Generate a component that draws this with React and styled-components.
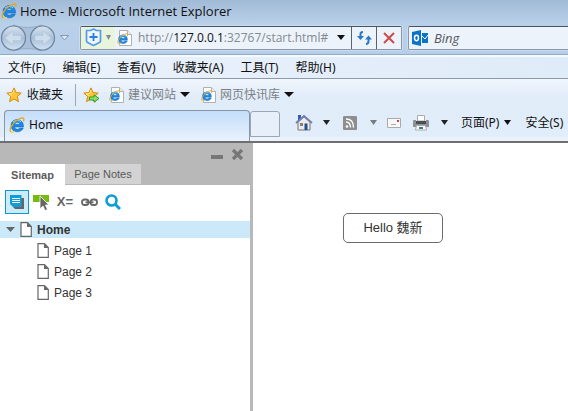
import React from "react";
import styled, { createGlobalStyle } from "styled-components";

const ui = '"Noto Sans", "Noto Sans CJK SC", sans-serif';
const arial = '"Liberation Sans", "Noto Sans CJK SC", sans-serif';

const GlobalStyle = createGlobalStyle`
  * { box-sizing: border-box; }
  body { margin: 0; background: #fff; color: #111; font: 12px/16px ${ui}; }
  button, input { font: inherit; color: inherit; }
  svg { display: block; flex: none; }
`;

const Window = styled.div`
  display: flex;
  flex-direction: column;
  min-height: 100vh;
`;

const Chrome = styled.header`
  background: linear-gradient(#a1bad6 0, #b9d0e9 24px, #b6cee9 55px);
`;

const TitleBar = styled.div`
  display: flex;
  align-items: center;
  gap: 3px;
  height: 21px;
  padding-left: 1px;
  white-space: nowrap;
`;

const Title = styled.h1`
  margin: 0;
  font: 13px/16px "Open Sans", sans-serif;
`;

const NavBar = styled.div`
  display: flex;
  align-items: center;
  height: 34px;
  border-bottom: 1px solid #94abc6;
`;

const PlainButton = styled.button`
  display: flex;
  align-items: center;
  flex: none;
  gap: ${(p) => p.$gap || 0}px;
  padding: 0;
  border: 0;
  background: none;
  color: #111;
  white-space: nowrap;
`;

const Travel = styled.div`
  display: flex;
  align-items: center;
  flex: none;
  width: 80px;
`;

const Field = styled.div`
  display: flex;
  align-items: center;
  flex: 0 0 322px;
  height: 24px;
  border: 1px solid #8996a5;
  border-top-color: #48535f;
  border-radius: 2px;
  background: #edf3fb;
  box-shadow: 0 0 0 1px #c9dcf0;
`;

const SearchField = styled(Field)`
  flex: 1 1 0;
  min-width: 0;
  margin-left: 6px;
  border-right: 0;
  border-radius: 2px 0 0 2px;
  box-shadow: -1px 0 0 #c9dcf0, 0 1px 0 #c9dcf0;
`;

const Shield = styled(PlainButton)`
  width: 34px;
  height: 22px;
  padding-left: 4px;
  background: #e9f4dd;
`;

const Address = styled.div`
  display: flex;
  align-items: center;
  flex: 1;
  gap: 6px;
  height: 22px;
  padding-left: 2px;
  color: #858a90;
  font: 12px/20px "Open Sans", sans-serif;
  white-space: nowrap;
`;

const Host = styled.span`
  color: #111;
`;

const FieldButton = styled(PlainButton)`
  justify-content: center;
  width: ${(p) => p.$w}px;
  height: 22px;
  border-left: ${(p) => (p.$line ? "1px solid #59636e" : "0")};
`;

const Search = styled.input`
  flex: 1;
  min-width: 0;
  height: 20px;
  padding: 0 0 0 5px;
  border: 0;
  outline: 0;
  background: none;
  font: italic 13px/16px "Open Sans", sans-serif;
  &::placeholder { color: #55585c; opacity: 1; }
`;

const MenuBar = styled.nav`
  display: flex;
  align-items: center;
  gap: 17px;
  height: 24px;
  padding: 0 8px;
  border-top: 2px solid #f2fbff;
  border-bottom: 1px solid #8c9aaa;
  background: linear-gradient(90deg, #ebf2fc, #dfebf8);
`;

const Lower = styled.div`
  background: linear-gradient(#f0f6fd 0, #e1ecf9 18px, #e1edfa 100%);
  border-bottom: 2px solid #6d6f72;
`;

const Favorites = styled.div`
  display: flex;
  align-items: center;
  height: 31px;
  padding: 0 6px;
`;

const Divider = styled.span`
  width: 1px;
  height: 22px;
  margin: 0 7px 0 12px;
  background: #9ba6b3;
`;

const FavGroup = styled.div`
  display: flex;
  align-items: center;
  gap: 9px;
`;

const FavLink = styled(PlainButton)`
  gap: 4px;
  padding-right: 2px;
  color: #7b7f84;
`;

const TabRow = styled.div`
  display: flex;
  align-items: flex-start;
  height: 31px;
  padding-left: 4px;
  border-bottom: 4px solid #edf3fa;
`;

const BrowserTab = styled(PlainButton)`
  width: 246px;
  height: 31px;
  padding: 0 4px 2px;
  border: 1px solid #8795a6;
  border-bottom: 0;
  border-radius: 4px 4px 0 0;
  background: linear-gradient(#c3ddfa, #eaf3fd);
  font: 12px/16px ${ui};
`;

const NewTab = styled(PlainButton)`
  width: 30px;
  height: 26px;
  margin-top: 1px;
  border: 1px solid #99a6b5;
  border-radius: 3px 3px 0 0;
  background: #e6effa;
`;

const Commands = styled.div`
  display: flex;
  align-items: center;
  height: 25px;
  padding-left: 15px;
`;

const CommandSet = styled.div`
  display: flex;
  align-items: center;
  gap: ${(p) => p.$gap}px;
  margin-right: ${(p) => p.$after}px;
`;

const Content = styled.div`
  display: flex;
  flex: 1;
`;

const Sidebar = styled.aside`
  flex: 0 0 253px;
  border-right: 3px solid #b8b8b8;
  font-family: ${arial};
  color: #333;
`;

const PanelHead = styled.div`
  display: flex;
  justify-content: flex-end;
  align-items: center;
  gap: 8px;
  height: 21px;
  padding: 2px 6px 0 0;
  background: #b8b8b8;
`;

const PanelTabs = styled.div`
  display: flex;
  height: 21px;
  background: #b8b8b8;
`;

const PanelTab = styled.button`
  height: ${(p) => (p.$active ? 21 : 20)}px;
  width: ${(p) => (p.$active ? 65 : 76)}px;
  padding: 0;
  border: 0;
  background: ${(p) => (p.$active ? "#fff" : "#d3d3d3")};
  color: #5a5a5a;
  font: ${(p) => (p.$active ? "bold" : "normal")} 11px/20px ${arial};
`;

const Tools = styled.div`
  display: flex;
  align-items: center;
  height: 36px;
  padding: 0 5px 2px;
`;

const ToolButton = styled(PlainButton)`
  justify-content: center;
  width: 24px;
  height: 24px;
  border: ${(p) => (p.$active ? "1px solid #0c98d6" : "0")};
  background: ${(p) => (p.$active ? "#cdeaf8" : "none")};
  color: #666;
  font: bold 13px/20px ${arial};
`;

const Tree = styled.ul`
  display: grid;
  gap: 4px;
  margin: 0;
  padding: 0;
  list-style: none;
`;

const TreeRow = styled.li`
  display: flex;
  align-items: center;
  gap: 5px;
  height: 17px;
  padding-left: ${(p) => (p.$root ? 6 : 37)}px;
  background: ${(p) => (p.$root ? "#cbe9f8" : "none")};
  font-weight: ${(p) => (p.$root ? "bold" : "normal")};
`;

const PageLink = styled.a`
  color: #333;
  text-decoration: none;
  font-size: 12px;
`;

const Page = styled.main`
  flex: 1;
  padding: 70px 0 0 90px;
`;

const HelloButton = styled.button`
  width: 100px;
  height: 30px;
  padding: 0;
  border: 1px solid #6c6c6c;
  border-radius: 5px;
  background: #fff;
  color: #333;
  font: 13px/26px ${arial};
`;

const Caret = ({ c = "#111", w = 8 }) => (
  <svg width={w} height="5" viewBox="0 0 10 5" preserveAspectRatio="none" aria-hidden="true">
    <path d="M0 0h10L5 5z" fill={c} />
  </svg>
);

const IeShapes = () => (
  <>
    <path d="M14.500 10H5.800c.4 2.700 3.800 2.900 4.900 1h3.600c-2.200 5.800-12.300 5-12.300-2.500C2 .500 15.200.300 14.500 10zM5.800 7.300h5.100c-.3-2.800-4.700-2.800-5.100 0z" fill="#1c8ae4" stroke="#0d5db4" strokeWidth=".5" />
    <path d="M4 5.200C5.800 3.200 9.800 2.900 12 4.700" stroke="#7fd6fb" strokeWidth="1.200" fill="none" />
    <path d="M2.200 15C-1 13 3.500 6 8.600 2.800c4.200-2.700 7.400-2.600 5.900 1.400" stroke="#eaa51b" strokeWidth="1.300" fill="none" />
    <path d="M2.200 15c1 .5 2.500 0 3.800-.8" stroke="#f5cb45" strokeWidth="1.200" fill="none" />
  </>
);

const IeIcon = () => (
  <svg width="16" height="16" viewBox="0 0 16 16" aria-hidden="true"><IeShapes /></svg>
);

const IePage = () => (
  <svg width="15" height="16" viewBox="0 0 15 16" aria-hidden="true">
    <path d="M2.500.5h8l4 4v11h-12z" fill="#fff" stroke="#b0b0b0" />
    <path d="M10.500.5v4h4" fill="#eee" stroke="#b0b0b0" />
    <g transform="translate(0 3) scale(.72)"><IeShapes /></g>
  </svg>
);

const Star = ({ add }) => (
  <svg width={add ? 17 : 16} height="16" viewBox={add ? "0 0 17 16" : "0 0 16 16"} aria-hidden="true">
    <path d="M8 .9l2.100 4.700 5.100.5-3.900 3.400 1.200 5.200L8 12l-4.500 2.700 1.200-5.200L.8 6.100l5.100-.5z" fill="#ffc532" stroke="#d78a16" strokeLinejoin="round" />
    <path d="M8 3L6.600 6.500 3 6.900l2.800 1.700" stroke="#ffe990" fill="none" />
    {add && <path d="M6.500 10h4.500V7.800l5 3.700-5 3.700V13H6.500z" fill="#8be068" stroke="#2f9a2b" />}
  </svg>
);

const TravelArrows = () => (
  <svg width="56" height="28" viewBox="0 0 56 28" aria-hidden="true">
    <defs>
      <linearGradient id="orb" x2="0" y2="1">
        <stop offset="0" stopColor="#d6e3f1" /><stop offset=".5" stopColor="#a9c0d9" /><stop offset="1" stopColor="#d1e2f3" />
      </linearGradient>
    </defs>
    <path d="M13 1q14 5 29 0v26q-15-5-29 0z" fill="#a9c0da" stroke="#96adc7" />
    <circle cx="13.500" cy="14" r="12" fill="url(#orb)" stroke="#6e8299" strokeWidth="1.200" />
    <circle cx="42.500" cy="14" r="12" fill="url(#orb)" stroke="#6e8299" strokeWidth="1.200" />
    <path d="M5 14l8-7v4.500h8v5h-8V21zM51 14l-8-7v4.500h-8v5h8V21z" fill="#cfdeed" stroke="#b2c5da" strokeWidth=".6" />
  </svg>
);

const PageIcon = () => (
  <svg width="12" height="15" viewBox="0 0 12 15" aria-hidden="true">
    <path d="M1 .700h6.500L11.300 4.500v9.800H1z" fill="#fff" stroke="#666" strokeWidth="1.200" />
    <path d="M7 .500v4.500h4.500z" fill="#666" />
  </svg>
);

const pages = ["Page 1", "Page 2", "Page 3"];
const menus = ["文件(F)", "编辑(E)", "查看(V)", "收藏夹(A)", "工具(T)", "帮助(H)"];
const favorites = ["建议网站", "网页快讯库"];

export default function App() {
  return (
    <Window>
      <GlobalStyle />
      <Chrome>
        <TitleBar><IeIcon /><Title>Home - Microsoft Internet Explorer</Title></TitleBar>
        <NavBar>
          <Travel>
            <PlainButton aria-label="Back and forward"><TravelArrows /></PlainButton>
            <PlainButton aria-label="Recent pages">
              <svg width="16" height="8" viewBox="0 0 16 8"><path d="M4.500 1.500h8L8.500 6z" fill="#dce8f4" stroke="#8398b1" /></svg>
            </PlainButton>
          </Travel>
          <Field>
            <Shield $gap={4} aria-label="Site protection">
              <svg width="17" height="19" viewBox="0 0 17 19">
                <path d="M1.500 2.500h4l3-1.500 3 1.500h4v10.500q0 1-1.500 1.700L8.500 17.500 3 14.700Q1.500 14 1.500 13z" fill="#edf6fb" stroke="#559be9" strokeWidth="1.700" strokeLinejoin="round" />
                <path d="M8.500 5v8M4.500 9h8" stroke="#277fe0" strokeWidth="1.800" />
              </svg>
              <Caret c="#7c8d96" w={5} />
            </Shield>
            <Address><IePage /><span>http://<Host>127.0.0.1</Host>:32767/start.html#</span></Address>
            <FieldButton $w={20} aria-label="Show addresses"><Caret /></FieldButton>
            <FieldButton $w={25} $line aria-label="Refresh">
              <svg width="15" height="14" viewBox="0 0 15 14">
                <path d="M6 1Q3.500 1 3.500 3v3M9 13q2.500 0 2.500-3V8" fill="none" stroke="#2877c8" strokeWidth="2" />
                <path d="M0 5h7L3.500 9zM8 8.500h7L11.500 4.500z" fill="#2877c8" />
              </svg>
            </FieldButton>
            <FieldButton $w={25} $line aria-label="Stop">
              <svg width="12" height="12" viewBox="0 0 12 12"><path d="M1 1l10 10M11 1L1 11" stroke="#c94b4b" strokeWidth="2" /></svg>
            </FieldButton>
          </Field>
          <SearchField>
            <svg width="20" height="18" viewBox="0 0 20 18" aria-hidden="true">
              <path d="M3 3l9-2v16l-9-2z" fill="#0873c9" /><path d="M13 4h6v10h-6z" fill="#0873c9" />
              <path d="M13 7l3 3 3-4" stroke="#fff" fill="none" />
              <ellipse cx="7.500" cy="9" rx="2" ry="2.700" stroke="#fff" strokeWidth="1.500" fill="none" />
            </svg>
            <Search aria-label="Search" placeholder="Bing" />
          </SearchField>
        </NavBar>
      </Chrome>

      <MenuBar>{menus.map((m) => <PlainButton key={m}>{m}</PlainButton>)}</MenuBar>

      <Lower>
        <Favorites>
          <PlainButton $gap={5}><Star />收藏夹</PlainButton>
          <Divider />
          <FavGroup>
            <PlainButton aria-label="Add to favorites bar"><Star add /></PlainButton>
            {favorites.map((f) => <FavLink key={f}><IePage />{f}<Caret w={10} /></FavLink>)}
          </FavGroup>
        </Favorites>
        <TabRow>
          <BrowserTab $gap={4}><IeIcon />Home</BrowserTab>
          <NewTab aria-label="New tab" />
          <Commands>
            <CommandSet $gap={10} $after={13}>
              <PlainButton aria-label="Home page">
                <svg width="18" height="17" viewBox="0 0 18 17">
                  <path d="M3 1h3v5H3z" fill="#3158bd" />
                  <path d="M3 8l6-5 6 5v8H3z" fill="#ecebea" stroke="#777" />
                  <path d="M1 9l8-7 8 7" fill="none" stroke="#7180ad" strokeWidth="1.800" />
                  <path d="M9.500 9.500h3V16h-3z" fill="#204e91" /><path d="M5 9h3v3H5z" fill="#7c8188" />
                </svg>
              </PlainButton>
              <PlainButton aria-label="Home page options"><Caret c="#222" w={7} /></PlainButton>
            </CommandSet>
            <CommandSet $gap={13} $after={10}>
              <PlainButton aria-label="Feeds">
                <svg width="14" height="14" viewBox="0 0 14 14">
                  <rect width="14" height="14" rx="1" fill="#8e8e8e" />
                  <circle cx="4" cy="10.500" r="1.300" fill="#fff" />
                  <path d="M3 6q4.500 0 4.500 5.500M3 3q7.500 0 7.500 8.500" fill="none" stroke="#fff" strokeWidth="1.400" />
                </svg>
              </PlainButton>
              <PlainButton aria-label="Feed options"><Caret c="#777d84" w={7} /></PlainButton>
            </CommandSet>
            <CommandSet $gap={12} $after={13}>
              <PlainButton aria-label="Read mail">
                <svg width="14" height="10" viewBox="0 0 14 10"><path d="M.5.500h13v9H.5z" fill="#f8f8f8" stroke="#aaa" /><path d="M10 2h2v2h-2z" fill="#d83b43" /><path d="M4 6.500h5" stroke="#aaa" /></svg>
              </PlainButton>
              <PlainButton aria-label="Print">
                <svg width="16" height="16" viewBox="0 0 16 16">
                  <path d="M4.500.500h7V6h-7z" fill="#fff" stroke="#aaa" />
                  <path d="M0 6q0-1 1-1h2v2h10V5h2q1 0 1 1v6H0z" fill="#8d9195" /><path d="M3 6h10v3H3z" fill="#4a4f54" />
                  <path d="M3.500 10.500h9l1 4.500h-11z" fill="#fff" stroke="#aaa" /><path d="M6 12h2v2H6z" fill="#2a9851" /><path d="M8 12h2v2H8z" fill="#3973be" />
                </svg>
              </PlainButton>
              <PlainButton aria-label="Print options"><Caret c="#222" w={7} /></PlainButton>
            </CommandSet>
            <CommandSet $gap={14} $after={0}>
              <PlainButton $gap={5}>页面(P)<Caret w={7} /></PlainButton>
              <PlainButton>安全(S)</PlainButton>
            </CommandSet>
          </Commands>
        </TabRow>
      </Lower>

      <Content>
        <Sidebar>
          <PanelHead>
            <PlainButton aria-label="Minimize"><svg width="12" height="12" viewBox="0 0 12 12"><path d="M0 6h12v4H0z" fill="#777" /></svg></PlainButton>
            <PlainButton aria-label="Close"><svg width="13" height="13" viewBox="0 0 13 13"><path d="M2 2l9 9M11 2l-9 9" stroke="#777" strokeWidth="3.200" /></svg></PlainButton>
          </PanelHead>
          <PanelTabs><PanelTab $active>Sitemap</PanelTab><PanelTab>Page Notes</PanelTab></PanelTabs>
          <Tools>
            <ToolButton $active aria-label="Sitemap view">
              <svg width="14" height="14" viewBox="0 0 14 14"><path d="M3 3h11v11H5l-2-2z" fill="#666" /><path d="M0 0h11.500v12H3L0 9z" fill="#0d9ddb" /><path d="M2 3.500h8M2 5.500h8M2 7.500h8" stroke="#fff" /></svg>
            </ToolButton>
            <ToolButton aria-label="Highlight interactive elements">
              <svg width="16" height="17" viewBox="0 0 16 17"><path d="M0 1h16v7H0z" fill="#75bb13" /><path d="M7 2v13l3-3 2 4.500 2.500-1-2-4.500H16z" fill="#666" stroke="#fff" strokeWidth=".8" /></svg>
            </ToolButton>
            <ToolButton aria-label="Variables">X=</ToolButton>
            <ToolButton aria-label="Links">
              <svg width="17" height="9" viewBox="0 0 17 9"><g fill="none" stroke="#666" strokeWidth="1.800"><rect x="1" y="1.500" width="6.500" height="5.500" rx="2.500" /><rect x="9.500" y="1.500" width="6.500" height="5.500" rx="2.500" /><path d="M4.500 4.300h8" /></g></svg>
            </ToolButton>
            <ToolButton aria-label="Search pages">
              <svg width="16" height="16" viewBox="0 0 16 16"><circle cx="6.500" cy="6.500" r="5" fill="none" stroke="#0d9ddb" strokeWidth="2.600" /><path d="M10.500 10.500L15 15" stroke="#0d9ddb" strokeWidth="3" /></svg>
            </ToolButton>
          </Tools>
          <Tree>
            <TreeRow $root><Caret c="#666" w={9} /><PageIcon /><PageLink href="#home">Home</PageLink></TreeRow>
            {pages.map((p) => <TreeRow key={p}><PageIcon /><PageLink href={"#" + p.replace(" ", "")}>{p}</PageLink></TreeRow>)}
          </Tree>
        </Sidebar>
        <Page><HelloButton>Hello 魏新</HelloButton></Page>
      </Content>
    </Window>
  );
}
